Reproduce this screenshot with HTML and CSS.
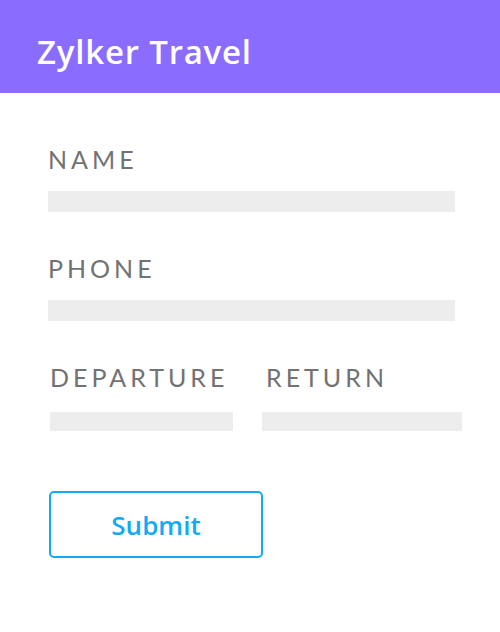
FILE: index.html
```html
<!DOCTYPE html>
<html lang="en">
<head>
    <meta charset="UTF-8">
    <meta name="viewport" content="width=device-width, initial-scale=1.0">
    <title>Zylker Travel</title>
    <link rel="stylesheet" href="styles.css">
</head>
<body>
    <header class="header">
        <h1>Zylker Travel</h1>
    </header>
    <form class="form">
        <div class="field">
            <label>NAME</label>
            <div class="bar"></div>
        </div>
        <div class="field">
            <label>PHONE</label>
            <div class="bar"></div>
        </div>
        <div class="row">
            <div class="field">
                <label>DEPARTURE</label>
                <div class="bar"></div>
            </div>
            <div class="field">
                <label>RETURN</label>
                <div class="bar"></div>
            </div>
        </div>
        <button type="button" class="submit">Submit</button>
    </form>
</body>
</html>
```

FILE: styles.css
```css
body {
    margin: 0;
    font-family: Lato, "Open Sans", sans-serif;
    background-color: white;
}
.header {
    background-color: #8a6dff;
    height: 93px;
    box-sizing: border-box;
    padding: 32px 0 0 37px;
}
.header h1 {
    margin: 0;
    color: white;
    font-family: "Open Sans", sans-serif;
    font-size: 33px;
    line-height: 40px;
    font-weight: 600;
    letter-spacing: 0.8px;
}
.form {
    padding: 52px 45px 0 48px;
    display: flex;
    flex-direction: column;
}
.field {
    display: flex;
    flex-direction: column;
    margin-bottom: 42px;
}
.field label {
    color: #727272;
    font-size: 25px;
    letter-spacing: 4px;
    line-height: 28px;
}
.bar {
    margin-top: 18px;
    height: 21px;
    background-color: #ededed;
}
.row {
    display: grid;
    grid-template-columns: 183px 200px;
    column-gap: 29px;
    margin-left: 2px;
    margin-right: -7px;
}
.row .field {
    margin-bottom: 60px;
}
.row .bar {
    height: 19px;
    margin-top: 21px;
}
.row .field + .field label {
    margin-left: 4px;
}
.submit {
    width: 214px;
    height: 67px;
    margin-left: 1px;
    border: 2px solid #13aaf5;
    border-radius: 5px;
    background: white;
    color: #13aaf5;
    font-family: "Open Sans", sans-serif;
    font-size: 26px;
    font-weight: 600;
    padding-top: 1px;
}
```
